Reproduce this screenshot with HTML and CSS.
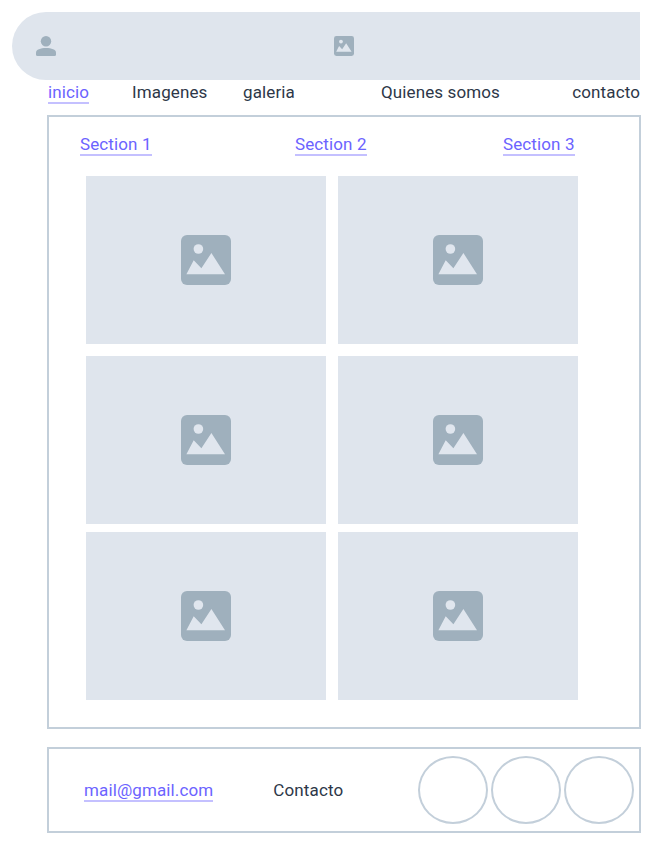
FILE: index.html
```html
<!DOCTYPE html>
<html lang="es">
<head>
<meta charset="utf-8">
<title>Inicio</title>
<link rel="stylesheet" href="styles.css">
</head>
<body>
<svg class="sprites" width="0" height="0" aria-hidden="true">
  <symbol id="img" viewBox="0 0 50 50">
    <rect width="50" height="50" rx="6" fill="#9fb0bd"/>
    <circle cx="17.4" cy="14" r="4.8" fill="#e0e6ee"/>
    <path d="M5.4 39.3 12.7 25.3 20.4 33.3 30.4 18 44 39.3Z" fill="#e0e6ee"/>
  </symbol>
</svg>
<header class="topbar">
  <svg class="icon-user" viewBox="0 0 20 20"><circle cx="10" cy="5.2" r="5.2"/><path d="M0 18.5v-2c0-3 4.500-4.500 10-4.500s10 1.500 10 4.500v2a1.500 1.500 0 0 1-1.500 1.500h-17a1.500 1.500 0 0 1-1.500-1.500Z"/></svg>
  <svg class="icon-small"><use href="#img"/></svg>
</header>
<nav class="nav">
  <a class="link" href="#">inicio</a>
  <span>Imagenes</span>
  <span>galeria</span>
  <span>Quienes somos</span>
  <span class="nav-last">contacto</span>
</nav>
<main class="panel">
  <div class="sections">
    <a class="link" href="#">Section 1</a>
    <a class="link" href="#">Section 2</a>
    <a class="link" href="#">Section 3</a>
  </div>
  <div class="gallery">
    <div class="tile"><svg class="icon-large"><use href="#img"/></svg></div>
    <div class="tile"><svg class="icon-large"><use href="#img"/></svg></div>
    <div class="tile"><svg class="icon-large"><use href="#img"/></svg></div>
    <div class="tile"><svg class="icon-large"><use href="#img"/></svg></div>
    <div class="tile tile-last"><svg class="icon-large"><use href="#img"/></svg></div>
    <div class="tile tile-last"><svg class="icon-large"><use href="#img"/></svg></div>
  </div>
</main>
<footer class="footer">
  <a class="link" href="#">mail@gmail.com</a>
  <span class="footer-contact">Contacto</span>
  <div class="circles">
    <div class="circle"></div>
    <div class="circle"></div>
    <div class="circle"></div>
  </div>
</footer>
</body>
</html>
```

FILE: styles.css
```css
* { box-sizing: border-box; }
html, body { margin: 0; background: #fff; }
body {
  width: 664px;
  padding: 12px 24px 0 12px;
  font-family: Roboto, "Liberation Sans", sans-serif;
  font-size: 17px;
  letter-spacing: 0.12px;
  line-height: 24px;
  color: #2d3748;
}
.sprites { position: absolute; }
.link {
  display: inline-block;
  color: #6c63ff;
  text-decoration: none;
  border-bottom: 2px solid #c4c0ff;
  padding-top: 2px;
  line-height: 20px;
}
.topbar {
  display: flex;
  align-items: center;
  height: 68px;
  padding-left: 24px;
  gap: 278px;
  background: #dfe5ed;
  border-radius: 34px 0 0 34px;
}
.icon-user { width: 20px; height: 20px; fill: #9fb0bd; }
.icon-small { width: 20px; height: 20px; }
.icon-large { width: 50px; height: 50px; }
.nav {
  display: grid;
  grid-template-columns: 84px 111px 138px 193px 66px;
  margin-left: 36px;
  height: 24px;
}
.nav > * { justify-self: start; }
.nav .nav-last { justify-self: end; white-space: nowrap; }
.panel {
  margin: 11px 0 0 35px;
  width: 594px;
  height: 614px;
  border: 2px solid #c3cfda;
  padding: 15px 0 0 37px;
}
.sections {
  display: grid;
  grid-template-columns: 215px 208px auto;
  justify-items: start;
  margin-left: -6px;
}
.gallery {
  display: grid;
  grid-template-columns: 240px 240px;
  column-gap: 12px;
  margin-top: 20px;
}
.tile {
  display: flex;
  align-items: center;
  justify-content: center;
  height: 168px;
  margin-bottom: 12px;
  background: #dfe5ed;
}
.tile:nth-child(n+3) { margin-bottom: 8px; }
.tile-last { margin-bottom: 0; }
.footer {
  display: flex;
  align-items: center;
  margin: 18px 0 0 35px;
  width: 594px;
  height: 86px;
  padding: 0 5px 0 35px;
  border: 2px solid #c3cfda;
}
.footer-contact { margin-left: 60px; }
.circles { display: flex; gap: 3px; margin-left: auto; }
.circle {
  width: 70px;
  height: 68px;
  border: 2px solid #c3cfda;
  border-radius: 50%;
}
```
